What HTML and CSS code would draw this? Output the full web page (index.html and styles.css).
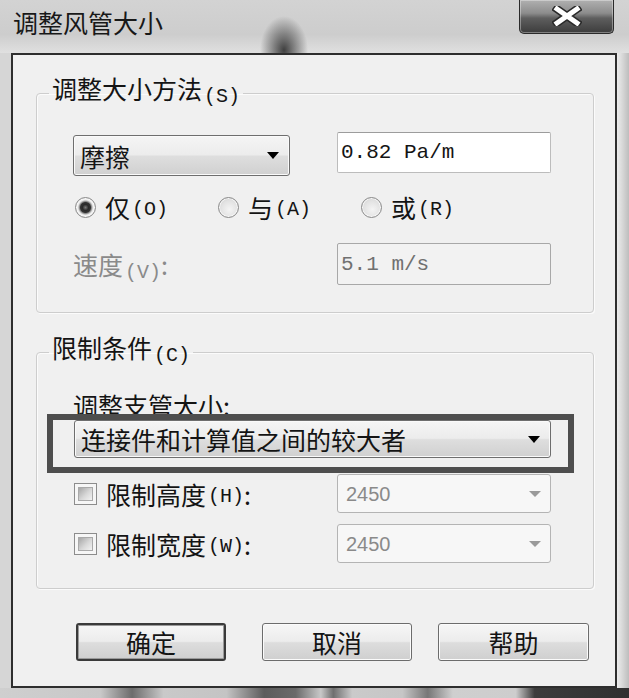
FILE: index.html
```html
<!DOCTYPE html>
<html lang="zh-CN">
<head>
<meta charset="utf-8">
<title>调整风管大小</title>
<link rel="stylesheet" href="styles.css">
</head>
<body>
<div class="window">
  <div class="titlebar">
    <div class="title">调整风管大小</div>
    <div class="close">
      <svg width="30" height="20" viewBox="0 0 30 20">
        <path d="M5 3 L25 17 M25 3 L5 17" stroke="#2a2a2a" stroke-width="8" stroke-linecap="square" fill="none"/>
        <path d="M5 3 L25 17 M25 3 L5 17" stroke="#ffffff" stroke-width="5" stroke-linecap="square" fill="none"/>
      </svg>
    </div>
  </div>
  <div class="main">
    <div class="client">
      <fieldset class="group g1">
        <legend>调整大小方法<span class="acc">(S)</span></legend>
        <div class="row r1">
          <div class="combo c-method"><span>摩擦</span><i class="arrow"></i></div>
          <div class="textbox t-pa">0.82 Pa/m</div>
        </div>
        <div class="row radios">
          <label class="radio"><span class="dot checked"></span>仅<span class="acc">(O)</span></label>
          <label class="radio"><span class="dot"></span>与<span class="acc">(A)</span></label>
          <label class="radio"><span class="dot"></span>或<span class="acc">(R)</span></label>
        </div>
        <div class="row r3">
          <span class="lbl disabled">速度<span class="acc">(V)</span>:</span>
          <div class="textbox disabled t-speed">5.1 m/s</div>
        </div>
      </fieldset>
      <fieldset class="group g2">
        <legend>限制条件<span class="acc">(C)</span></legend>
        <div class="branch-label">调整支管大小:</div>
        <div class="combo big-combo"><span>连接件和计算值之间的较大者</span><i class="arrow"></i></div>
        <div class="row chk-row first">
          <label class="chk"><span class="box"></span>限制高度<span class="acc">(H)</span>:</label>
          <div class="combo dis-combo"><span>2450</span><i class="arrow grey"></i></div>
        </div>
        <div class="row chk-row second">
          <label class="chk"><span class="box"></span>限制宽度<span class="acc">(W)</span>:</label>
          <div class="combo dis-combo"><span>2450</span><i class="arrow grey"></i></div>
        </div>
      </fieldset>
      <div class="buttons">
        <div class="btn default">确定</div>
        <div class="btn b2">取消</div>
        <div class="btn b3">帮助</div>
      </div>
    </div>
    <div class="rframe"></div>
  </div>
  <div class="bframe"></div>
  <div class="annot"></div>
</div>
</body>
</html>
```
FILE: styles.css
```css
* { box-sizing: border-box; }
html, body { margin: 0; padding: 0; }
body {
  width: 629px;
  height: 698px;
  overflow: hidden;
  font-family: "Noto Sans CJK SC", "Noto Sans", sans-serif;
  color: #141414;
  background: #d4d4d4;
}
.window {
  position: relative;
  width: 629px;
  height: 698px;
  background: #d6d6d6;
}
.titlebar {
  height: 53px;
  display: flex;
  justify-content: space-between;
  align-items: flex-start;
  background:
    radial-gradient(ellipse 24px 34px at 284px 50px, rgba(55,55,55,0.95), rgba(80,80,80,0.5) 55%, rgba(200,200,200,0) 100%),
    linear-gradient(#d3d3d3, #cdcdcd 65%, #e0e0e0);
}
.title {
  font-size: 25px;
  line-height: 30px;
  margin: 7px 0 0 13px;
  color: #181818;
}
.close {
  width: 95px;
  height: 34px;
  margin-right: 15px;
  border: 1px solid #2a2a2a;
  border-top: none;
  border-radius: 0 0 5px 5px;
  background: linear-gradient(#b0b0b0, #8c8c8c 40%, #5e5e5e 55%, #3c3c3c);
  box-shadow: inset 0 0 0 1px rgba(255,255,255,0.35);
  display: flex;
  align-items: center;
  justify-content: center;
  padding-bottom: 2px;
}
.main {
  display: flex;
  height: 635px;
}
.client {
  width: 606px;
  height: 635px;
  margin-left: 11px;
  border: 2px solid #2e2e2e;
  background: #f0f0f0;
}
.rframe {
  flex: 1;
  background: linear-gradient(to right, #ececec, #dadada 40%, #bdbdbd);
}
.bframe {
  height: 10px;
  background: linear-gradient(to right, #cfcfcf 0, #c8c8c8 16%, #6c6c6c 21%, #c9c9c9 26%, #c4c4c4 36%, #5c5c5c 42%, #6a6a6a 47%, #c8c8c8 51%, #6f6f6f 53%, #cacaca 56%, #c6c6c6 64%, #777 68%, #cfcfcf 72%, #cdcdcd 82%, #3c3c3c 85%, #303030 100%);
}

/* group boxes */
.group {
  margin: 0 21px 0 23px;
  padding: 0;
  min-width: 0;
  border: 1px solid #cdcdcd;
  border-radius: 4px;
  box-shadow: inset 1px 1px 0 #fbfbfb, 1px 1px 0 #fbfbfb;
}
.group legend {
  display: block;
  height: 40px;
  margin-left: 12px;
  padding: 0 3px 10px;
  font-size: 25px;
  line-height: 30px;
}
.g1 { margin-top: 18px; padding-bottom: 27px; }
.g2 { margin-top: 19px; padding-bottom: 25px; }

.acc {
  font-family: "Liberation Mono", monospace;
  font-size: 20px;
  line-height: 1;
  margin-left: 2px;
  position: relative;
  top: 3px;
}

.row { display: flex; }

/* combo boxes */
.combo {
  display: flex;
  align-items: center;
  justify-content: space-between;
  border: 1px solid #6e6e6e;
  border-radius: 3px;
  background: linear-gradient(#f5f5f5, #ececec 48%, #dedede 52%, #d0d0d0);
  box-shadow: inset 0 0 0 1px #fafafa;
  font-size: 25px;
  line-height: 30px;
  padding: 0 10px 0 6px;
}
.arrow {
  width: 0;
  height: 0;
  border-left: 6px solid transparent;
  border-right: 6px solid transparent;
  border-top: 7px solid #000;
}
.arrow.grey { border-top-color: #9a9a9a; border-top-width: 6px; }

.r1 { align-items: flex-start; margin-top: 19px; padding-left: 36px; }
.c-method { width: 217px; height: 41px; margin-top: 3px; }

.textbox {
  display: flex;
  align-items: center;
  font-family: "Liberation Mono", monospace;
  font-size: 21px;
  padding-left: 3px;
  background: #fff;
  border: 1px solid #bcbcbc;
  border-top-color: #9c9c9c;
  border-radius: 2px;
}
.t-pa { margin-left: 47px; width: 214px; height: 41px; }

.radios { align-items: center; height: 30px; margin-top: 16px; padding-left: 38px; }
.radio {
  display: flex;
  align-items: center;
  width: 143px;
  height: 30px;
  font-size: 25px;
  line-height: 30px;
}
.dot {
  width: 21px;
  height: 21px;
  margin-right: 9px;
  border-radius: 50%;
  border: 1px solid #8a8a8a;
  background: radial-gradient(circle at 55% 60%, #f4f4f4 0, #e2e2e2 55%, #c8c8c8 100%);
  box-shadow: inset 0 0 0 1px #f7f7f7;
}
.dot.checked {
  background: radial-gradient(circle at 50% 50%, #7a7a7a 0, #2a2a2a 3px, #333 5px, #8a8a8a 6px, #e8e8e8 7.5px, #f2f2f2 8.5px, #c9c9c9 10px);
}

.r3 { align-items: center; margin-top: 21px; padding-left: 36px; height: 42px; }
.lbl { width: 264px; font-size: 25px; line-height: 30px; }
.disabled { color: #8a8a8a; }
.textbox.disabled {
  background: #f2f2f2;
  border-color: #a8a8a8;
  color: #707070;
}
.t-speed { width: 214px; height: 42px; }

/* group 2 */
.branch-label {
  height: 30px;
  margin-top: 18px;
  padding-left: 36px;
  font-size: 25px;
  line-height: 30px;
}
.big-combo { margin-left: 37px; width: 477px; height: 38px; }

.chk-row { align-items: center; padding-left: 37px; height: 39px; }
.chk-row.first { margin-top: 16px; }
.chk-row.second { margin-top: 11px; }
.chk {
  display: flex;
  align-items: center;
  width: 263px;
  height: 30px;
  font-size: 25px;
  line-height: 30px;
}
.box {
  position: relative;
  width: 23px;
  height: 22px;
  margin-right: 9px;
  border: 1px solid #8c8c8c;
  background: #f6f6f6;
}
.box::after {
  content: "";
  position: absolute;
  left: 3px;
  top: 3px;
  right: 3px;
  bottom: 3px;
  border: 1px solid #a9a9a9;
  background: linear-gradient(135deg, #a6a6a6, #d8d8d8 55%, #f2f2f2);
}
.dis-combo {
  width: 214px;
  height: 39px;
  background: #f7f7f7;
  border-color: #b4b4b4;
  box-shadow: none;
  font-family: "Liberation Sans", sans-serif;
  font-size: 20px;
  color: #8a8a8a;
  padding: 0 9px 0 8px;
}

/* buttons */
.buttons {
  display: flex;
  margin-top: 34px;
  padding-left: 63px;
}
.btn {
  width: 150px;
  height: 38px;
  border: 1px solid #6c6c6c;
  border-radius: 3px;
  background: linear-gradient(#f6f6f6, #ececec 48%, #dddddd 52%, #cfcfcf);
  box-shadow: inset 0 0 0 1px #fbfbfb;
  font-size: 25px;
  line-height: 36px;
  text-align: center;
}
.btn.default {
  border: 2px solid #3a3a3a;
  line-height: 34px;
  box-shadow: inset 0 0 0 1px #9a9a9a;
}
.b2 { margin-left: 36px; }
.b3 { margin-left: 26px; width: 151px; }

/* annotation overlay */
.annot {
  position: absolute;
  left: 47px;
  top: 414px;
  width: 527px;
  height: 59px;
  border: 6px solid #4e4e4e;
  pointer-events: none;
}
```
